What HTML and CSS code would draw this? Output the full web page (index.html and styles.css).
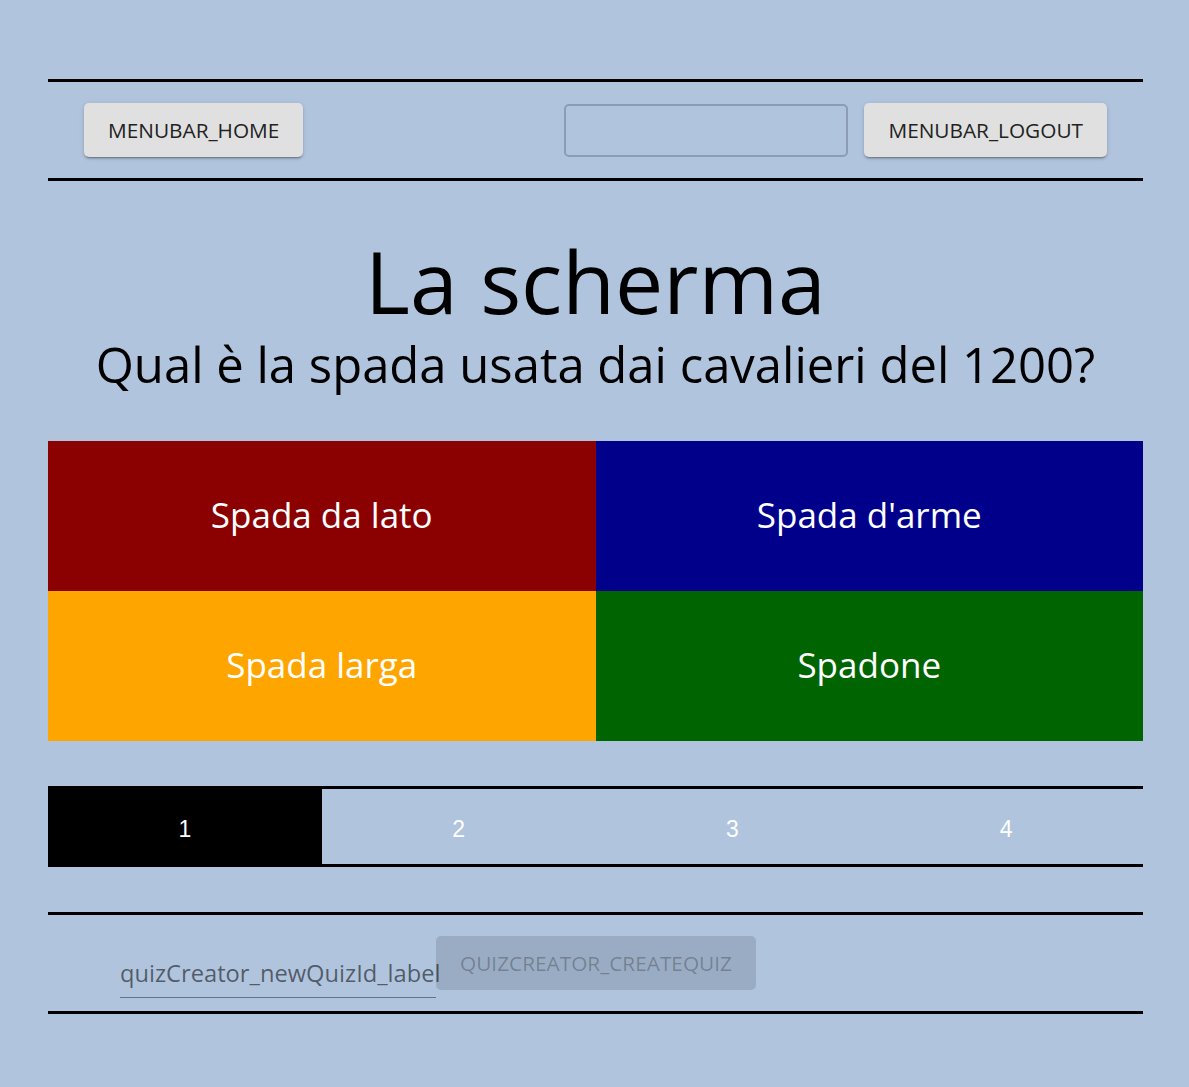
FILE: index.html
```html
<!DOCTYPE html>
<html lang="it">
<head>
<meta charset="utf-8">
<title>La scherma</title>
<link rel="stylesheet" href="styles.css">
</head>
<body>
<div class="page">
  <nav class="menubar">
    <button class="btn btn-raised">MENUBAR_HOME</button>
    <div class="menubar-right">
      <input class="menu-input" type="text" aria-label="search">
      <button class="btn btn-raised">MENUBAR_LOGOUT</button>
    </div>
  </nav>

  <header class="quiz-head">
    <h1 class="quiz-title">La scherma</h1>
    <h2 class="quiz-question">Qual è la spada usata dai cavalieri del 1200?</h2>
  </header>

  <section class="answers">
    <div class="answer answer-red">Spada da lato</div>
    <div class="answer answer-blue">Spada d'arme</div>
    <div class="answer answer-orange">Spada larga</div>
    <div class="answer answer-green">Spadone</div>
  </section>

  <nav class="pager">
    <div class="pager-item active">1</div>
    <div class="pager-item">2</div>
    <div class="pager-item">3</div>
    <div class="pager-item">4</div>
  </nav>

  <section class="creator">
    <label class="field">
      <span class="field-label">quizCreator_newQuizId_label</span>
    </label>
    <button class="btn btn-disabled" disabled>QUIZCREATOR_CREATEQUIZ</button>
  </section>
</div>
</body>
</html>
```

FILE: styles.css
```css
html, body {
  margin: 0;
  padding: 0;
}
body {
  background: #b0c4de;
  font-family: "Open Sans", "Noto Sans", sans-serif;
  color: #000;
}
.page {
  padding: 79px 46px 0 48px;
}

/* menubar */
.menubar {
  border-top: 3px solid #000;
  border-bottom: 3px solid #000;
  height: 96px;
  padding: 0 36px;
  display: flex;
  align-items: center;
  justify-content: space-between;
}
.menubar-right {
  display: flex;
  align-items: center;
  gap: 16px;
}
.btn {
  font-family: "Open Sans", "Noto Sans", sans-serif;
  font-size: 20.8px;
  height: 54px;
  padding: 0 24px;
  border: none;
  border-radius: 5px;
  letter-spacing: 0;
}
.btn-raised {
  background: #e0e0e0;
  color: #222;
  box-shadow: 0 3px 1px -2px rgba(0,0,0,0.2), 0 2px 2px 0 rgba(0,0,0,0.14), 0 1px 5px 0 rgba(0,0,0,0.12);
}
.menu-input {
  box-sizing: border-box;
  width: 284px;
  height: 53px;
  background: transparent;
  border: 2px solid #8c9cb5;
  border-radius: 5px;
}

/* heading */
.quiz-head {
  text-align: center;
  padding: 54px 0 39px;
}
.quiz-title {
  margin: 0;
  font-weight: 400;
  font-size: 86px;
  line-height: 92px;
}
.quiz-question {
  margin: 0;
  font-weight: 400;
  font-size: 49px;
  line-height: 75px;
}

/* answers */
.answers {
  display: grid;
  grid-template-columns: 1fr 1fr;
  grid-auto-rows: 150px;
}
.answer {
  display: flex;
  align-items: center;
  justify-content: center;
  color: #fff;
  font-size: 35px;
  padding-bottom: 3px;
}
.answer-red { background: #8b0000; }
.answer-blue { background: #00008b; }
.answer-orange { background: #ffa500; }
.answer-green { background: #006400; }

/* pager */
.pager {
  margin-top: 45px;
  display: grid;
  grid-template-columns: repeat(4, 1fr);
  border-top: 3px solid #000;
  border-bottom: 3px solid #000;
  height: 75px;
}
.pager-item {
  display: flex;
  align-items: center;
  justify-content: center;
  color: #fff;
  font-family: "Liberation Sans", Arial, sans-serif;
  font-size: 23px;
  padding-top: 5px;
}
.pager-item.active {
  background: #000;
  margin: -3px 0;
}

/* creator */
.creator {
  margin-top: 45px;
  border-top: 3px solid #000;
  border-bottom: 3px solid #000;
  height: 96px;
  padding: 0 0 0 72px;
  display: flex;
  align-items: flex-start;
}
.field {
  display: block;
  width: 316px;
  height: 83px;
  box-sizing: border-box;
  border-bottom: 1px solid rgba(0,0,0,0.42);
  padding-top: 42px;
  white-space: nowrap;
}
.field-label {
  font-size: 23.7px;
  color: rgba(0,0,0,0.55);
}
.btn-disabled {
  margin-top: 21px;
  background: rgba(0,0,0,0.12);
  color: rgba(0,0,0,0.26);
  height: 54px;
}
```
